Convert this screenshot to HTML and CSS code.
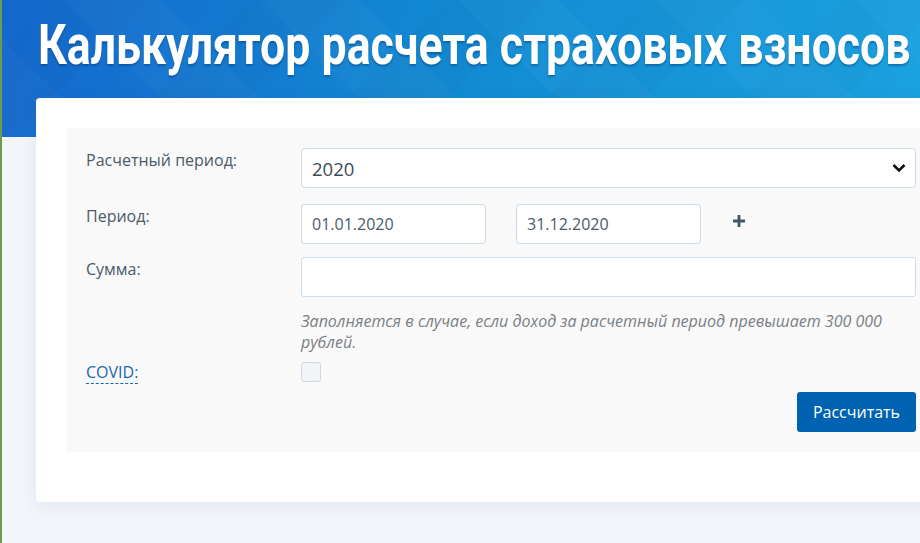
FILE: index.html
```html
<!DOCTYPE html>
<html lang="ru">
<head>
<meta charset="utf-8">
<title>Калькулятор расчета страховых взносов</title>
<link rel="stylesheet" href="styles.css">
</head>
<body>
<div class="page">
  <header class="hero">
    <h1 class="hero-title"><span class="hero-text">Калькулятор расчета страховых взносов</span></h1>
  </header>
  <main class="card">
    <form class="panel">
      <div class="row row-period">
        <label class="label">Расчетный период:</label>
        <div class="field">
          <div class="select">
            <span class="select-value">2020</span>
            <svg class="chevron" width="14" height="10" viewBox="0 0 14 10"><path d="M1.5 2 L7 7.5 L12.5 2" fill="none" stroke="#111" stroke-width="2.6"/></svg>
          </div>
        </div>
      </div>
      <div class="row row-dates">
        <label class="label">Период:</label>
        <div class="field dates">
          <div class="input date">01.01.2020</div>
          <div class="input date">31.12.2020</div>
          <svg class="plus" width="12" height="12" viewBox="0 0 12 12"><path d="M6 0 V12 M0 6 H12" stroke="#3d5566" stroke-width="2.8"/></svg>
        </div>
      </div>
      <div class="row row-sum">
        <label class="label">Сумма:</label>
        <div class="field">
          <div class="input wide"></div>
          <p class="hint">Заполняется в случае, если доход за расчетный период превышает 300 000 рублей.</p>
        </div>
      </div>
      <div class="row row-covid">
        <label class="label"><span class="covid">COVID:</span></label>
        <div class="field">
          <span class="checkbox"></span>
        </div>
      </div>
      <div class="actions">
        <button type="button" class="btn">Рассчитать</button>
      </div>
    </form>
  </main>
</div>
</body>
</html>
```
FILE: styles.css
```css
html, body {
  margin: 0;
  padding: 0;
  overflow: hidden;
}
body {
  background: #f2f5fa;
  font-family: "Open Sans", "Noto Sans", sans-serif;
  border-left: 2px solid #6b9b4c;
  height: 543px;
  box-sizing: border-box;
}
.page {
  width: 1000px;
}
.hero {
  height: 137px;
  background:
    repeating-linear-gradient(45deg, rgba(255,255,255,0.025) 0 70px, rgba(255,255,255,0) 70px 140px),
    repeating-linear-gradient(-45deg, rgba(0,0,0,0.02) 0 70px, rgba(0,0,0,0) 70px 140px),
    linear-gradient(100deg, #1468cd 0%, #128ad3 45%, #1ca6e2 100%);
  box-sizing: border-box;
  padding: 13px 0 0 36px;
}
.hero-title {
  margin: 0;
  font-family: Roboto, "Liberation Sans", sans-serif;
  font-weight: 700;
  font-size: 55px;
  line-height: 64px;
  color: #fff;
  white-space: nowrap;
  text-shadow: 0 2px 2px rgba(0, 40, 90, 0.35);
}
.hero-text {
  display: inline-block;
  transform: scaleX(0.812);
  transform-origin: left center;
}
.card {
  display: block;
  margin: -39px 0 0 34px;
  width: 930px;
  background: #fff;
  border-radius: 4px;
  padding: 30px 30px 50px 30px;
  box-sizing: border-box;
  box-shadow: 0 4px 18px rgba(30, 60, 110, 0.08);
}
.panel {
  background: #f9f9f9;
  padding: 20px 20px 20px 20px;
  margin: 0;
}
.row {
  display: grid;
  grid-template-columns: 215px 615px;
}
.row-period { margin-bottom: 16px; }
.row-dates { margin-bottom: 13px; }
.row-sum { margin-bottom: 9px; }
.label {
  font-size: 16px;
  line-height: 24px;
  color: #4b5a67;
}
.field { min-width: 0; }
.select, .input {
  box-sizing: border-box;
  height: 40px;
  background: #fff;
  border: 1px solid #c9dcf0;
  border-radius: 3px;
  color: #4a5a68;
}
.select {
  display: flex;
  align-items: center;
  justify-content: space-between;
  padding: 0 9px 0 10px;
  border-radius: 4px;
}
.select-value {
  font-size: 18.5px;
  color: #3c4b58;
}
.input {
  display: flex;
  align-items: center;
  padding: 0 10px;
  font-size: 16px;
}
.dates {
  display: flex;
  align-items: center;
}
.date { width: 185px; }
.date + .date { margin-left: 30px; }
.plus { margin-left: 32px; margin-top: -6px; }
.hint {
  margin: 14px 0 0 0;
  font-style: italic;
  font-size: 16px;
  line-height: 21px;
  color: #7a7f84;
}
.row-covid .label { margin-top: -2px; }
.covid {
  color: #1868ad;
  border-bottom: 1px dashed #1868ad;
  font-size: 16px;
}
.checkbox {
  display: block;
  width: 20px;
  height: 20px;
  box-sizing: border-box;
  background: #f1f3f6;
  border: 1px solid #cbd9e8;
  border-radius: 3px;
}
.actions {
  display: flex;
  justify-content: flex-end;
  margin-top: 8px;
  width: 830px;
}
.btn {
  height: 40px;
  width: 119px;
  background: #0063b2;
  color: #fff;
  border: none;
  border-radius: 3px;
  font-family: "Open Sans", sans-serif;
  font-size: 16px;
  padding: 0;
}
```
